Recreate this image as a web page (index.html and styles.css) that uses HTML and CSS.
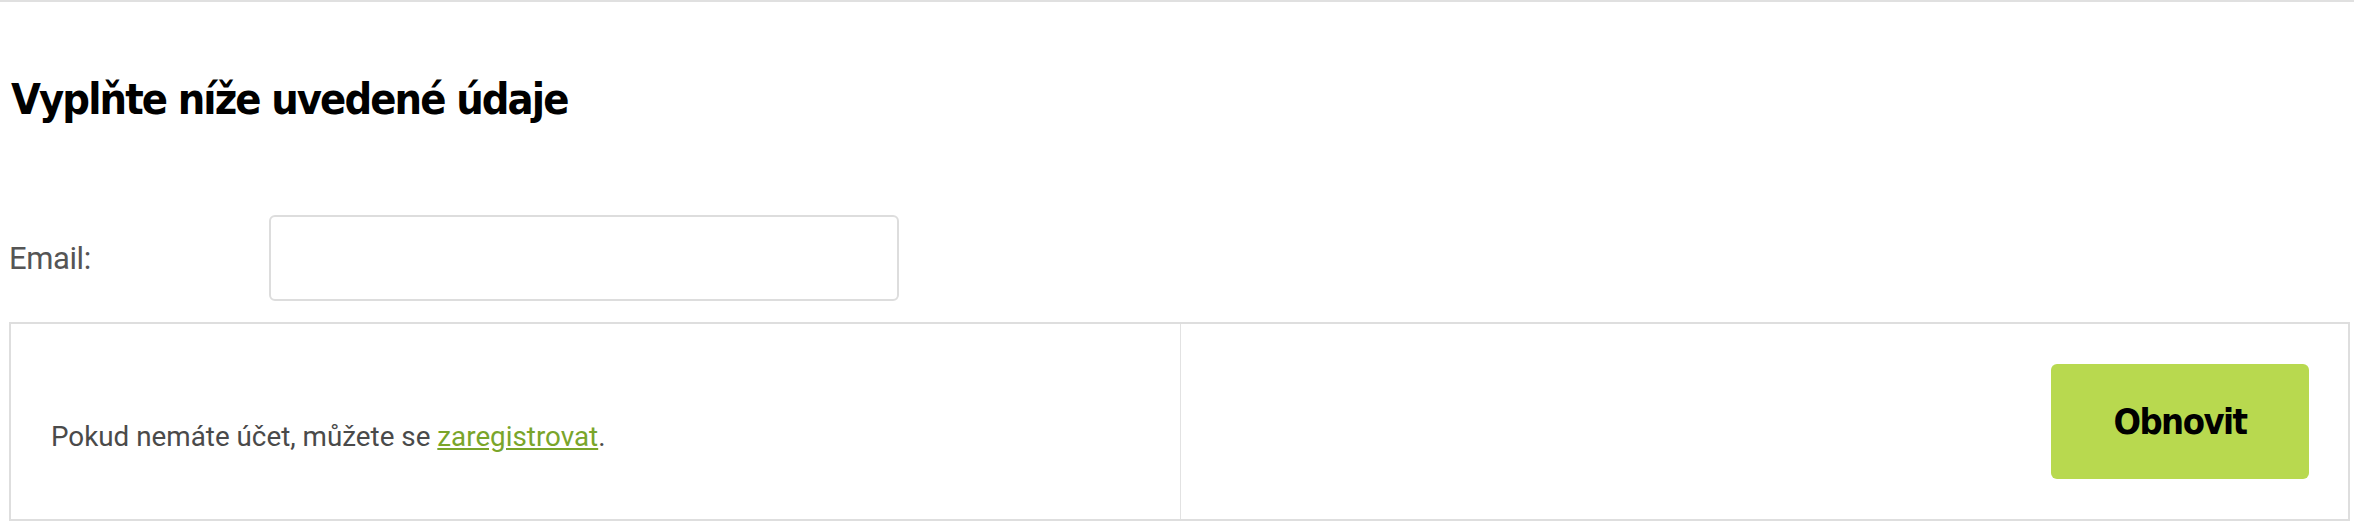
FILE: index.html
```html
<!DOCTYPE html>
<html lang="cs">
<head>
<meta charset="utf-8">
<title>Obnovit heslo</title>
<link rel="stylesheet" href="styles.css">
</head>
<body>
<div class="page">
  <h1 class="title">Vyplňte níže uvedené údaje</h1>
  <form class="form">
    <div class="field">
      <label class="field-label" for="email">Email:</label>
      <input class="field-input" id="email" type="email">
    </div>
    <div class="actions">
      <div class="actions-info">
        <p class="info-text">Pokud nemáte účet, můžete se <a class="info-link" href="#">zaregistrovat</a>.</p>
      </div>
      <div class="actions-submit">
        <button class="btn-submit" type="button">Obnovit</button>
      </div>
    </div>
  </form>
</div>
</body>
</html>
```
FILE: styles.css
```css
html, body {
  margin: 0;
  padding: 0;
  background: #fff;
}

body {
  font-family: Roboto, "Liberation Sans", sans-serif;
  border-top: 2px solid #e0e0e0;
}

.page {
  padding: 0 4px 0 9px;
}

.title {
  margin: 70px 0 0;
  padding-left: 2px;
  font-family: "DejaVu Sans Condensed", "Liberation Sans", sans-serif;
  font-weight: 700;
  font-size: 43px;
  letter-spacing: -1.9px;
  line-height: 55px;
  color: #000;
}

.form {
  margin: 88px 0 0;
}

.field {
  display: flex;
  align-items: center;
}

.field-label {
  width: 260px;
  font-size: 31px;
  letter-spacing: -0.4px;
  color: #555;
}

.field-input {
  box-sizing: border-box;
  width: 630px;
  height: 86px;
  border: 2px solid #dddddd;
  border-radius: 6px;
  background: #fff;
  margin: 0;
  padding: 0 16px;
  font-size: 24px;
  outline: none;
}

.actions {
  display: grid;
  grid-template-columns: 1169px 1fr;
  margin-top: 21px;
  border: 2px solid #dedede;
}

.actions-info {
  display: flex;
  align-items: center;
  padding: 30px 20px 0 40px;
}

.info-text {
  margin: 0;
  font-size: 27.8px;
  color: #4a4a4a;
}

.info-link {
  color: #7aa52a;
  text-decoration: underline;
}

.actions-submit {
  display: flex;
  justify-content: flex-end;
  padding: 40px 39px;
  border-left: 1px solid #e2e2e2;
}

.btn-submit {
  width: 258px;
  height: 115px;
  border: 0;
  border-radius: 6px;
  background: #b8d94f;
  color: #000;
  font-family: "DejaVu Sans Condensed", "Liberation Sans", sans-serif;
  font-weight: 700;
  font-size: 36px;
  letter-spacing: -1.5px;
  cursor: pointer;
}
```
